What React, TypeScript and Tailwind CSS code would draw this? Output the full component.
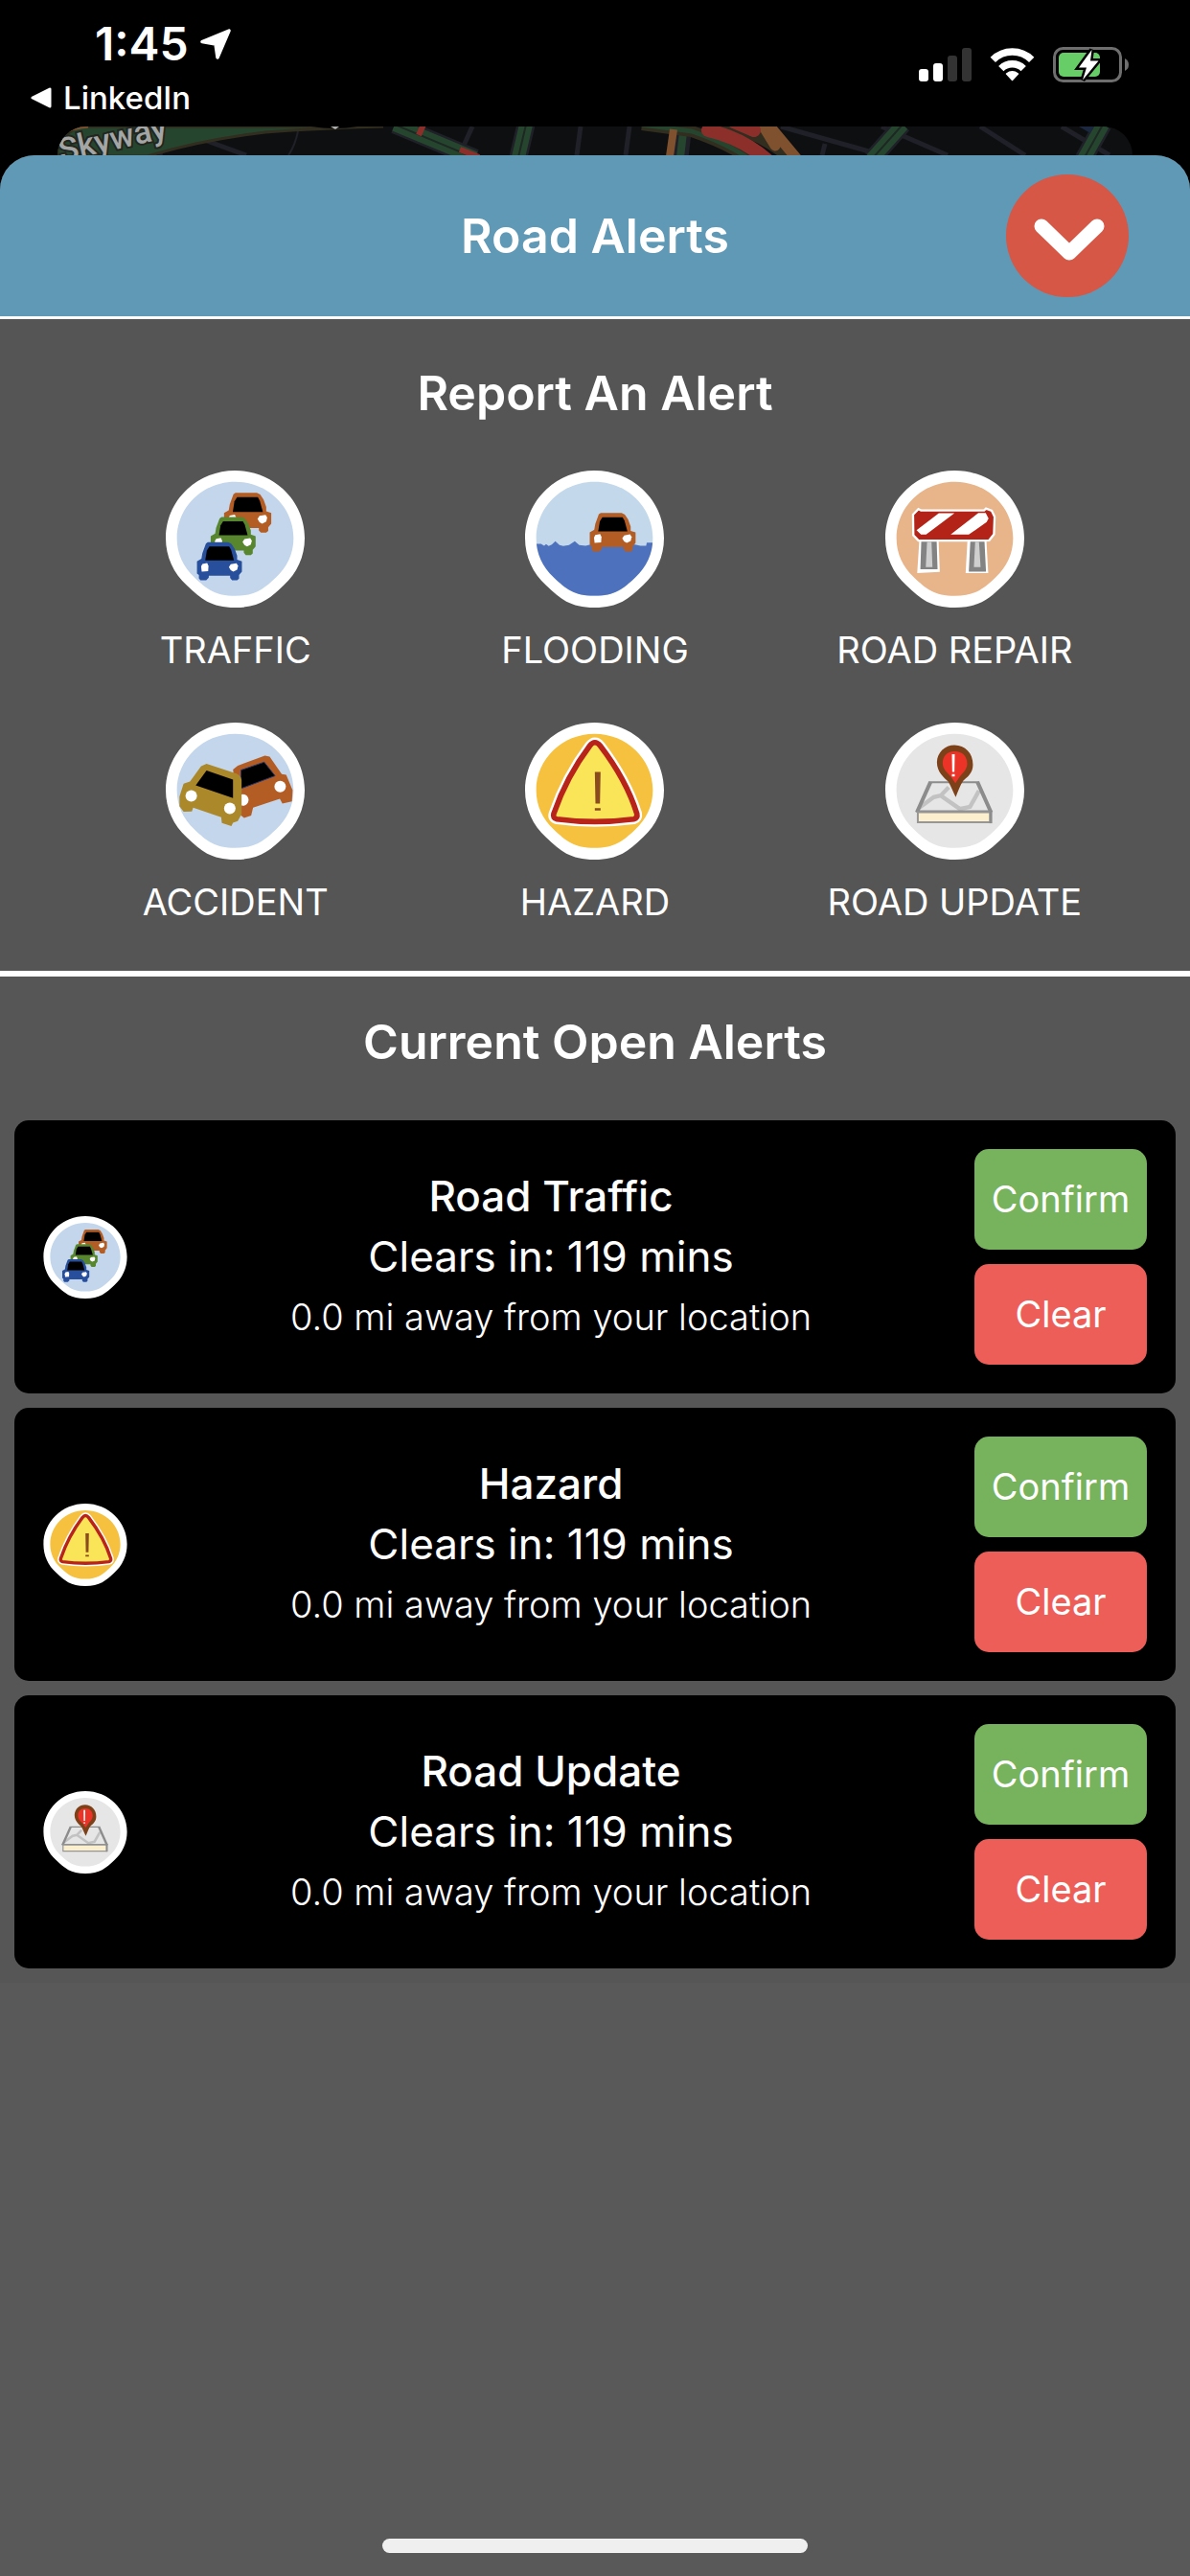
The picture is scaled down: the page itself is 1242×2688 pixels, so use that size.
import React, { useId } from "react";

type AlertKind = "traffic" | "flooding" | "repair" | "accident" | "hazard" | "update";

function Car({ color, transform }: { color: string; transform: string }) {
  return (
    <g transform={transform}>
      <path
        fill={color}
        d="M28 4 L34 0 H98 L108 5 L118 20 L126 42 V55 L141 60 V92 L132 103 V114 L126 119 H110 L104 112 V105 H37 V111 L29 119 H11 L6 113 V103 L0 98 V60 L14 52 L17 34 Z"
      />
      <path fill="#000" d="M39 13 H101 L107 24 L116 57 H26 L31 26 Z" />
      <path fill="#fff" d="M17 68 L32 65 L36 74 L35 91 L15 92 L13 76 Z" />
      <path fill="#fff" d="M106 69 L124 66 L129 74 L126 86 L114 92 L106 88 L100 78 Z" />
    </g>
  );
}

const DISC_FILL: Record<AlertKind, string> = {
  traffic: "#c3d6eb",
  flooding: "#c3d8eb",
  repair: "#e8b48a",
  accident: "#c3d6eb",
  hazard: "#f5c13f",
  update: "#e6e6e6",
};

const OUTER_DISC =
  "M218 0 C339 0 436 95 436 212 C436 270 412 322 370 360 C326 402 294 430 218 430 C142 430 110 402 66 360 C24 322 0 270 0 212 C0 95 97 0 218 0Z";

const INNER_DISC =
  "M218 35 C319 35 401 114 401 212 C401 260 381 303 346 335 C309 370 282 393 218 393 C154 393 127 370 90 335 C55 303 35 260 35 212 C35 114 117 35 218 35Z";

function AlertIcon({ kind, className }: { kind: AlertKind; className: string }) {
  const clip = useId();
  return (
    <svg viewBox="0 0 436 430" className={className} aria-hidden="true">
      <path fill="#fff" d={OUTER_DISC} />
      <path fill={DISC_FILL[kind]} d={INNER_DISC} />
      {kind === "traffic" && (
        <>
          <Car color="#b35d25" transform="translate(183 70) scale(1.05)" />
          <Car color="#57862f" transform="translate(141 146)" />
          <Car color="#284f9c" transform="translate(98 225)" />
        </>
      )}
      {kind === "flooding" && (
        <>
          <clipPath id={clip}>
            <path d={INNER_DISC} />
          </clipPath>
          <path
            clipPath={`url(#${clip})`}
            fill="#4e71be"
            d="M35 230 L50 230 L60 236 L66 231 L74 237 L84 232 L95 222 L108 234 L120 237 L138 234 L156 222 L170 234 L190 236 L205 232 H345 L362 236 H380 L382 226 H410 V400 H35Z"
          />
          <Car color="#b35d25" transform="translate(203 133) scale(1.02)" />
        </>
      )}
      {kind === "repair" && (
        <>
          <path fill="#fff" d="M107 214 H167 L171 318 L100 322Z M258 214 H317 L323 322 H252Z" />
          <path fill="#838383" d="M113 218 H161 L164 310 H110Z M267 218 H311 L316 317 H262Z" />
          <path fill="#cfcfcf" d="M131 224 H145 L148 303 H127Z M282 224 H294 L299 303 H278Z" />
          <path
            fill="#b32317"
            stroke="#fff"
            strokeWidth="7"
            d="M104 121 L112 125 H310 L316 119 L334 126 L343 145 L341 200 L326 219 L315 220 H104 L88 203 L87 138Z"
          />
          <path fill="#fff" d="M168 134 H217 L128 201 H112 L98 187Z M292 133 H315 L324 150 L318 162 L262 201 H205Z" />
        </>
      )}
      {kind === "accident" && (
        <>
          <path
            fill="#b35d25"
            d="M211 147 L226 135 L311 104 L326 107 L364 162 L378 164 L398 212 L396 247 L366 254 L358 239 L274 267 L268 292 L246 299 L231 287Z"
          />
          <path fill="#000" stroke="#27386f" strokeWidth="3" d="M236 149 L309 124 L343 167 L236 207Z" />
          <circle cx="359" cy="201" r="18" fill="#fff" />
          <circle cx="242" cy="243" r="18" fill="#fff" />
          <path
            fill="#ab8829"
            d="M128 129 L222 160 Q236 166 238 180 V287 L226 309 L211 314 L206 325 L176 315 L174 297 L86 267 L82 279 L56 280 L43 262 V232 L56 192 L76 185 L111 137Z"
          />
          <path fill="#000" d="M128 150 L211 179 V237 L94 197Z" />
          <circle cx="80" cy="230" r="18" fill="#fff" />
          <circle cx="201" cy="269" r="18" fill="#fff" />
        </>
      )}
      {kind === "hazard" && (
        <>
          <path
            fill="none"
            stroke="#fff"
            strokeWidth="32"
            strokeLinejoin="round"
            d="M203 73 Q219 52 236 73 Q318 180 351 286 Q354 300 341 303 Q218 319 100 303 Q86 300 90 286 Q130 170 203 73Z"
          />
          <path
            fill="#fae457"
            stroke="#b8231a"
            strokeWidth="17"
            strokeLinejoin="round"
            d="M203 73 Q219 52 236 73 Q318 180 351 286 Q354 300 341 303 Q218 319 100 303 Q86 300 90 286 Q130 170 203 73Z"
          />
          <path fill="#8a4b1f" d="M219 155 H237 L235 254 H221Z M219 268 H237 V276 H219Z" />
        </>
      )}
      {kind === "update" && (
        <>
          <path fill="none" stroke="#c2c2c2" strokeWidth="13" d="M108 266 L152 234 L174 229 L199 203 M174 229 L234 271 L266 264 L294 214" />
          <path fill="none" stroke="#8c8c8c" strokeWidth="12" d="M142 186 L99 282 M289 186 L332 282" />
          <path fill="none" stroke="#8c8c8c" strokeWidth="6" d="M139 187 H294 M97 278 H334" />
          <path fill="#fcefcd" stroke="#969696" strokeWidth="6" d="M102 281 H329 V313 H102Z" />
          <path fill="none" stroke="#8c8c8c" strokeWidth="9" d="M331 278 V316" />
          <path
            fill="#7d411a"
            d="M217 71 C250 71 275 96 275 132 C275 158 258 170 245 182 C235 196 228 216 221 234 C213 218 206 200 198 186 C184 172 162 156 162 124 C163 94 187 71 217 71Z"
          />
          <path
            fill="#eb3328"
            d="M217 90 C242 90 257 106 257 129 C256 150 240 160 232 172 L220 190 L206 170 C196 158 180 148 180 127 C180 106 194 90 217 90Z"
          />
          <path fill="#fff" d="M209 99 H218 L217 155 H210Z M209 162 H218 V169 H209Z" />
        </>
      )}
    </svg>
  );
}

function LocationArrow() {
  return (
    <svg viewBox="0 0 32 32" className="size-8" aria-hidden="true">
      <path
        d="M30 2 L18 30 L16 16 L2 13.500Z"
        fill="#fff"
        stroke="#fff"
        strokeWidth="3.500"
        strokeLinejoin="round"
      />
    </svg>
  );
}

function StatusBar() {
  return (
    <div className="flex justify-between pt-[22px] pr-[64px] pb-3 pl-8">
      <div className="flex flex-col gap-3.5">
        <div className="flex items-center gap-3 pl-[67px]">
          <span className="text-[48px] leading-[48px] font-semibold">1:45</span>
          <LocationArrow />
        </div>
        <a href="#linkedin" className="flex items-center gap-3 text-[33px] leading-9 font-medium">
          <svg viewBox="0 0 22 22" className="size-[22px]" aria-hidden="true">
            <path d="M2 11 L20 2 V20Z" fill="#fff" stroke="#fff" strokeWidth="3" strokeLinejoin="round" />
          </svg>
          LinkedIn
        </a>
      </div>
      <div className="flex items-start gap-[19px] pt-[27px]">
        <svg viewBox="0 0 55 36" className="h-9 w-[55px]" role="img" aria-label="Signal 2 of 4">
          <rect x="0" y="23" width="10" height="13" rx="3" fill="#fff" />
          <rect x="15" y="17" width="10" height="19" rx="3" fill="#fff" />
          <rect x="30" y="9" width="10" height="27" rx="3" fill="#333" />
          <rect x="45" y="1" width="10" height="35" rx="3" fill="#333" />
        </svg>
        <svg viewBox="0 0 47 36" className="h-9 w-[47px]" role="img" aria-label="Wi-Fi">
          <g fill="none" stroke="#fff" strokeWidth="7.500">
            <path d="M3.300 13.400 A28.500 28.500 0 0 1 43.700 13.400" />
            <path d="M11.800 22.600 A16.500 16.500 0 0 1 35.200 22.600" />
          </g>
          <path
            d="M17.500 28 Q23.500 23.500 29.500 28 L23.500 34.500Z"
            fill="#fff"
            stroke="#fff"
            strokeWidth="1.500"
            strokeLinejoin="round"
          />
        </svg>
        <svg viewBox="0 0 79 37" className="h-[37px] w-[79px]" role="img" aria-label="Battery charging">
          <rect x="1.500" y="1.500" width="69" height="34" rx="9" fill="none" stroke="#6e6e6e" strokeWidth="3" />
          <path d="M75 12 Q79 14 79 18.500 Q79 23 75 25Z" fill="#6e6e6e" />
          <rect x="6" y="6" width="43" height="25" rx="5" fill="#67ce67" />
          <path
            d="M40.500 3 L27 21.500 H35 L31 34.500 L47.500 14.500 H39Z"
            fill="#fff"
            stroke="#000"
            strokeWidth="5"
            paintOrder="stroke"
          />
        </svg>
      </div>
    </div>
  );
}

function MapPeek() {
  return (
    <div className="mx-[60px] h-[30px] overflow-hidden rounded-t-[30px] bg-[#0e0f11]">
      <svg viewBox="0 0 1122 30" preserveAspectRatio="xMidYMid slice" className="size-full" aria-hidden="true">
        <g fill="none" stroke="#1f2028" strokeWidth="5">
          <path d="M156 15 L197 30 M433 0 L423 22 M546 0 L542 30 M597 0 L593 30 M109 22 L107 30" />
          <path d="M755 0 L854 28 M801 18 L798 30 M860 0 L929 30 M963 0 L1010 30 M1048 0 L1098 30" />
          <path d="M251 5 Q248 20 241 30" strokeWidth="2" />
        </g>
        <path
          d="M22 0 H340 Q269 2 217 6 Q150 14 94 31 H0 V14Z"
          fill="#26452f"
          stroke="#312d1f"
          strokeWidth="3"
        />
        <path d="M10 4 Q18 0 32 -1" stroke="#80512e" strokeWidth="5" fill="none" />
        <g fill="none" stroke="#1f2028" strokeWidth="19">
          <path d="M352 -2 L436 33 M489 -2 L481 32 M882 -2 L850 34 M1091 -2 L1071 34 M653 -2 L649 32" />
        </g>
        <g fill="none" stroke="#26452f" strokeWidth="14">
          <path d="M352 -2 L436 33 M489 -2 L481 32 M882 -2 L850 34 M1091 -2 L1071 34" />
          <path d="M654 -2 L650 32" strokeWidth="8" />
        </g>
        <g fill="none" stroke="#1d2823" strokeWidth="2">
          <path d="M352 -2 L436 33 M489 -2 L481 32 M882 -2 L850 34 M1091 -2 L1071 34" />
        </g>
        <path d="M610 -2 L662 5 Q700 18 722 34 M692 -4 Q740 10 765 34" stroke="#312d1f" strokeWidth="12" fill="none" />
        <path d="M610 -2 L662 5 Q700 18 722 34" stroke="#26452f" strokeWidth="5" fill="none" />
        <path d="M643 3 L639 31" stroke="#80512e" strokeWidth="8" fill="none" />
        <path d="M735 -3 L749 20 M742 -2 L772 34" stroke="#80512e" strokeWidth="11" strokeLinecap="round" fill="none" />
        <path d="M679 4 Q715 12 742 36 M706 -5 L727 4" stroke="#8c2f2b" strokeWidth="14" strokeLinecap="round" fill="none" />
        <path d="M420 24 L440 32 M382 -2 L377 9" stroke="#8c2f2b" strokeWidth="6" fill="none" />
        <path d="M265 0 Q289 4 313 0Z" fill="#000" />
        <path d="M285 0 H294 L290 3Z" fill="#b0b0b0" />
        <path d="M1066 0 H1082 L1078 7Z" fill="#1c2740" />
        <text
          transform="translate(4 37) rotate(-13)"
          className="fill-[#a3a6a5] stroke-[#23261f] stroke-4 font-['Roboto'] text-[34px] font-medium [paint-order:stroke]"
        >
          Skyway
        </text>
      </svg>
    </div>
  );
}

const REPORTS: { kind: AlertKind; label: string }[] = [
  { kind: "traffic", label: "TRAFFIC" },
  { kind: "flooding", label: "FLOODING" },
  { kind: "repair", label: "ROAD REPAIR" },
  { kind: "accident", label: "ACCIDENT" },
  { kind: "hazard", label: "HAZARD" },
  { kind: "update", label: "ROAD UPDATE" },
];

const OPEN_ALERTS: { kind: AlertKind; title: string; clears: string; distance: string }[] = [
  { kind: "traffic", title: "Road Traffic", clears: "Clears in: 119 mins", distance: "0.0 mi away from your location" },
  { kind: "hazard", title: "Hazard", clears: "Clears in: 119 mins", distance: "0.0 mi away from your location" },
  { kind: "update", title: "Road Update", clears: "Clears in: 119 mins", distance: "0.0 mi away from your location" },
];

export default function App() {
  return (
    <div className="flex min-h-screen flex-col bg-black font-['Inter','Liberation_Sans',sans-serif] text-white">
      <StatusBar />
      <MapPeek />
      <main className="flex flex-1 flex-col overflow-hidden rounded-t-[36px] bg-[#595959]">
        <header className="grid grid-cols-[1fr_auto_1fr] items-center border-b-3 border-white bg-[#5f99b6] px-16 py-5">
          <h1 className="col-start-2 text-[50px] leading-[60px] font-semibold">Road Alerts</h1>
          <button
            type="button"
            aria-label="Close"
            className="flex size-32 items-center justify-center justify-self-end rounded-full bg-[#d65745]"
          >
            <svg viewBox="0 0 128 128" className="size-32" aria-hidden="true">
              <path
                d="M37 54 L66 82 L95 54"
                fill="none"
                stroke="#fff"
                strokeWidth="15"
                strokeLinecap="round"
                strokeLinejoin="round"
              />
            </svg>
          </button>
        </header>

        <section className="border-b-6 border-white bg-[#555] px-[58px] pt-[47px] pb-12">
          <h2 className="text-center text-[50px] leading-[60px] font-semibold">Report An Alert</h2>
          <div className="mt-[51px] grid grid-cols-3 gap-y-[52px]">
            {REPORTS.map((report) => (
              <button key={report.kind} type="button" className="flex flex-col items-center gap-5">
                <AlertIcon kind={report.kind} className="h-[143px] w-[145px]" />
                <span className="text-[38px] leading-[48px]">{report.label}</span>
              </button>
            ))}
          </div>
        </section>

        <section className="bg-[#565656]">
          <h2 className="mt-[46px] mb-[60px] h-11 overflow-hidden text-center text-[50px] leading-11 font-semibold">
            Current Open Alerts
          </h2>
          <ul className="flex flex-col gap-[15px] px-[15px] pb-[15px]">
            {OPEN_ALERTS.map((alert) => (
              <li key={alert.title} className="flex items-center rounded-[15px] bg-black p-[30px]">
                <AlertIcon kind={alert.kind} className="h-[86px] w-[88px] shrink-0" />
                <div className="flex-1 text-center leading-[63px]">
                  <h3 className="text-[44px] font-medium">{alert.title}</h3>
                  <p className="text-[44px]">{alert.clears}</p>
                  <p className="text-[38px] font-light">{alert.distance}</p>
                </div>
                <div className="flex w-[180px] shrink-0 flex-col gap-[15px]">
                  <button type="button" className="h-[105px] rounded-[15px] bg-[#77b25d] text-[38px]">
                    Confirm
                  </button>
                  <button type="button" className="h-[105px] rounded-[15px] bg-[#ee5e58] text-[38px]">
                    Clear
                  </button>
                </div>
              </li>
            ))}
          </ul>
        </section>

        <div className="mx-auto mt-auto mb-6 h-[15px] w-[444px] rounded-full bg-[#efefef]" />
      </main>
    </div>
  );
}
